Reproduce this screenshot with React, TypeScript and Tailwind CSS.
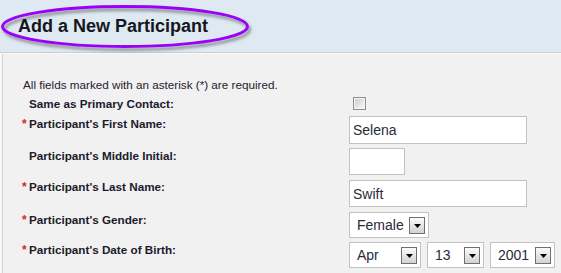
import React from "react";

const LABEL = "text-[11.7px] leading-[14px] font-bold text-[#1b1b2b]";

function Label({ text, req, pt = 0 }: { text: string; req?: boolean; pt?: number }) {
  return (
    <div className={`w-[327px] shrink-0 flex ${LABEL}`} style={{ paddingTop: pt }}>
      <span className="w-[7px] shrink-0 text-[#d02a2a] font-bold text-[12px]">{req ? "*" : ""}</span>
      <span>{text}</span>
    </div>
  );
}

function Arrow() {
  return (
    <div className="w-[16px] h-[17px] shrink-0 border border-[#707070] bg-gradient-to-b from-[#fbfbfb] to-[#d2d2d2] flex items-center justify-center">
      <svg width="7" height="4" viewBox="0 0 7 4" className="mt-[1px]">
        <polygon points="0,0 7,0 3.5,4" fill="#000" />
      </svg>
    </div>
  );
}

function Select({ value, w }: { value: string; w: number }) {
  return (
    <div
      className="h-[26px] box-border border border-[#c2c2c2] bg-white flex items-center pl-[7px] pr-[3px]"
      style={{ width: w }}
    >
      <span className="flex-1 text-[14px] leading-[16px] text-[#2a2a3a]">{value}</span>
      <Arrow />
    </div>
  );
}

function TextInput({ value, w, h }: { value: string; w: number; h: number }) {
  return (
    <div
      className="box-border border border-[#c2c2c2] bg-white flex items-center pl-[3px] text-[14px] leading-[16px] text-[#2a2a3a]"
      style={{ width: w, height: h }}
    >
      {value}
    </div>
  );
}

export default function App() {
  return (
    <div className="w-[561px] h-[273px] overflow-hidden bg-[#f8f8f8] flex flex-col" style={{ fontFamily: '"Liberation Sans", Arial, sans-serif' }}>
      {/* Header */}
      <div className="relative h-[53px] shrink-0 bg-[#dee9f1] border-b border-[#c6cfd5] pl-[18px] pt-[17px]">
        <svg className="absolute left-0 top-0" width="262" height="56" viewBox="0 0 262 56">
          <defs>
            <filter id="sh" x="-10%" y="-30%" width="120%" height="160%">
              <feDropShadow dx="2" dy="3" stdDeviation="1.6" floodColor="#444" floodOpacity="0.55" />
            </filter>
          </defs>
          <ellipse cx="125" cy="26.5" rx="122.5" ry="20" fill="none" stroke="#9c05f7" strokeWidth="3" filter="url(#sh)" />
        </svg>
        <div className="relative text-[18px] leading-[18px] font-bold text-[#161620]">Add a New Participant</div>
      </div>
      <div className="h-[1px] shrink-0 bg-[#fafafa]" />
      {/* Body */}
      <div className="flex-1 ml-[2px] border-l border-[#cfcfcf] bg-[#f1f1f1] pl-[19px] pt-[24px] flex flex-col">
        <div className="ml-[1px] text-[11.7px] leading-[14px] text-[#222230]">
          All fields marked with an asterisk (*) are required.
        </div>

        <div className="mt-[5px] flex items-start h-[14px]">
          <Label text="Same as Primary Contact:" />
          <div className="ml-[4px] w-[13px] h-[13px] box-border border border-[#8e8f8f] p-[1px] bg-[#f4f4f4]">
            <div className="w-full h-full bg-gradient-to-br from-[#cfcfcf] to-[#f7f7f7]" />
          </div>
        </div>

        <div className="mt-[5px] flex items-start">
          <Label text="Participant's First Name:" req pt={1} />
          <TextInput value="Selena" w={178} h={28} />
        </div>

        <div className="mt-[4px] flex items-start">
          <Label text="Participant's Middle Initial:" pt={1} />
          <TextInput value="" w={56} h={27} />
        </div>

        <div className="mt-[5px] flex items-start">
          <Label text="Participant's Last Name:" req pt={0} />
          <TextInput value="Swift" w={178} h={27} />
        </div>

        <div className="mt-[5px] flex items-start">
          <Label text="Participant's Gender:" req pt={1} />
          <Select value="Female" w={80} />
        </div>

        <div className="mt-[4px] flex items-start">
          <Label text="Participant's Date of Birth:" req pt={1} />
          <div className="flex gap-[6px]">
            <Select value="Apr" w={72} />
            <Select value="13" w={57} />
            <Select value="2001" w={65} />
          </div>
        </div>
      </div>
    </div>
  );
}
